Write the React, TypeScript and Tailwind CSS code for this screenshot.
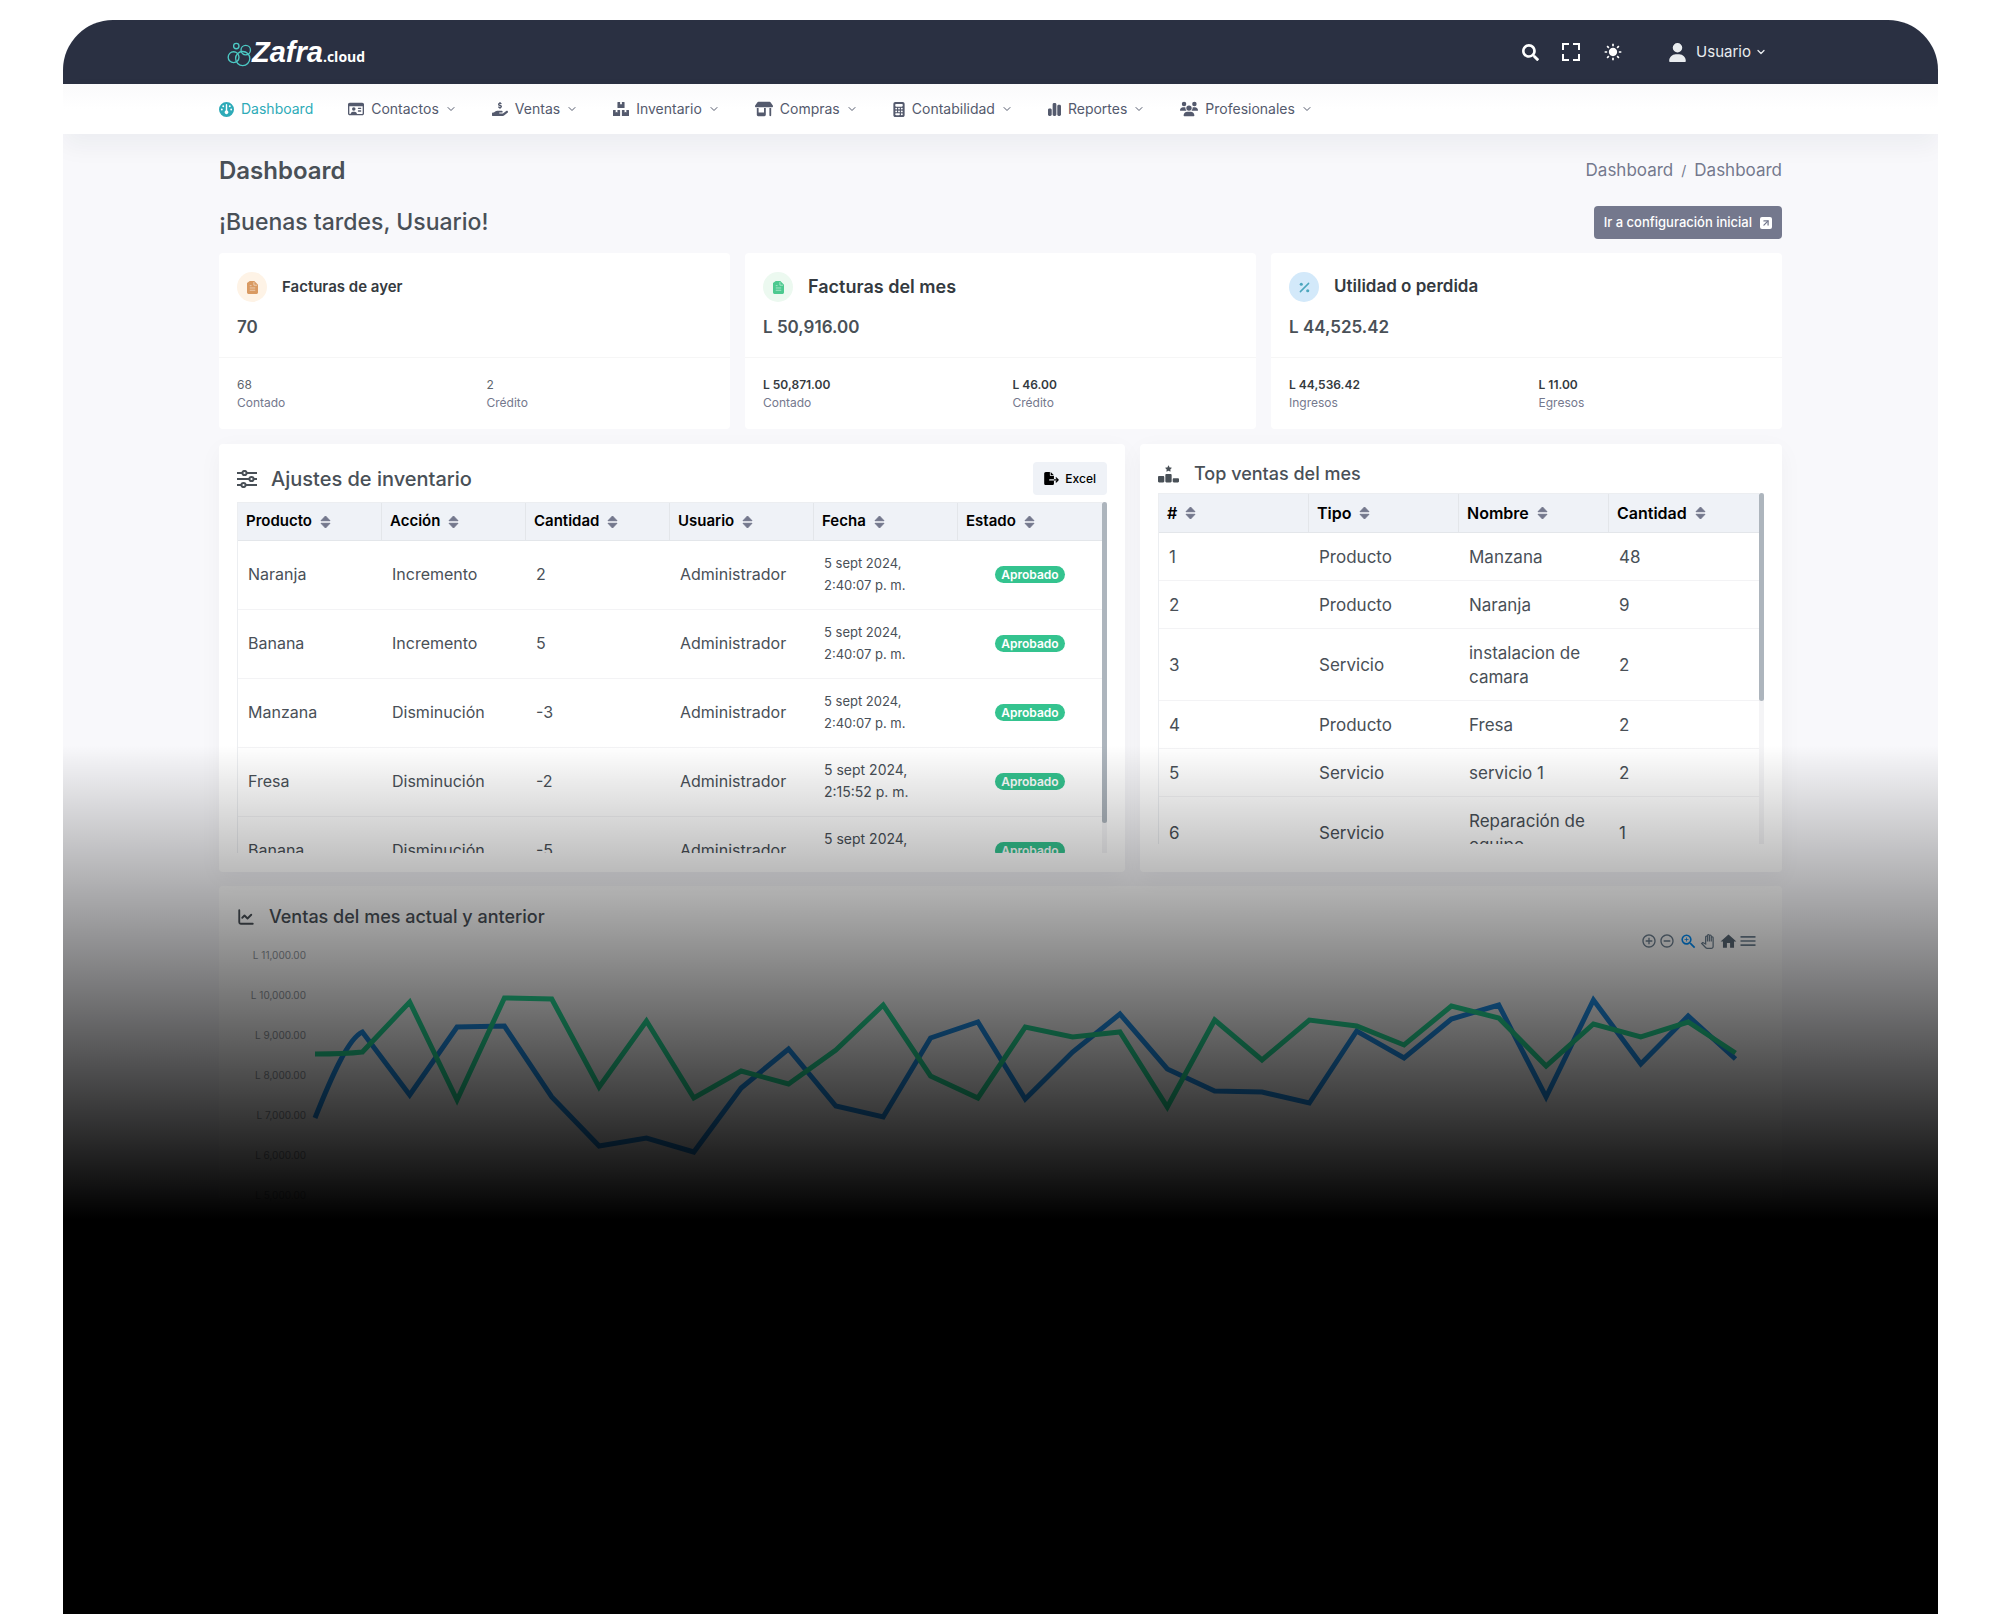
import React from "react";
import {
  FaGauge,
  FaRegIdCard,
  FaHandHoldingDollar,
  FaShop,
  FaCalculator,
  FaChartSimple,
  FaUsers,
  FaUser,
  FaFileExport,
  FaRankingStar,
} from "react-icons/fa6";
import { FaBoxes, FaSearch } from "react-icons/fa";
import { BiFullscreen, BiSolidSun } from "react-icons/bi";
import {
  MdAddCircleOutline,
  MdRemoveCircleOutline,
  MdZoomIn,
  MdOutlinePanTool,
  MdHome,
  MdMenu,
} from "react-icons/md";
import { ChevronDown, ChartLine, ArrowUpRight } from "lucide-react";

const navItems = [
  { label: "Dashboard", icon: FaGauge, size: "size-[15px]", active: true },
  { label: "Contactos", icon: FaRegIdCard, size: "size-4" },
  { label: "Ventas", icon: FaHandHoldingDollar, size: "size-4" },
  { label: "Inventario", icon: FaBoxes, size: "size-4" },
  { label: "Compras", icon: FaShop, size: "h-4 w-[18px]" },
  { label: "Contabilidad", icon: FaCalculator, size: "h-[15px] w-3" },
  { label: "Reportes", icon: FaChartSimple, size: "h-[15px] w-[13px]" },
  { label: "Profesionales", icon: FaUsers, size: "h-4 w-[18px]" },
];

const adjustments = [
  ["Naranja", "Incremento", "2", "5 sept 2024,", "2:40:07 p. m."],
  ["Banana", "Incremento", "5", "5 sept 2024,", "2:40:07 p. m."],
  ["Manzana", "Disminución", "-3", "5 sept 2024,", "2:40:07 p. m."],
  ["Fresa", "Disminución", "-2", "5 sept 2024,", "2:15:52 p. m."],
  ["Banana", "Disminución", "-5", "5 sept 2024,", "2:15:52 p. m."],
];

const topSales = [
  ["1", "Producto", "Manzana", "48"],
  ["2", "Producto", "Naranja", "9"],
  ["3", "Servicio", "instalacion de camara", "2"],
  ["4", "Producto", "Fresa", "2"],
  ["5", "Servicio", "servicio 1", "2"],
  ["6", "Servicio", "Reparación de equipo", "1"],
];

function Logo() {
  return (
    <a href="#" className="flex items-center pt-1 text-white" aria-label="Zafra.cloud">
      <svg viewBox="37 33 73 74" className="size-[25px]" fill="none" stroke="#4cc9c4" strokeWidth="4">
        <circle cx="64" cy="45" r="8" />
        <circle cx="92" cy="57" r="14" />
        <circle cx="56" cy="78" r="16" />
        <circle cx="83" cy="82" r="21" />
      </svg>
      <span className="flex items-baseline leading-8 font-bold">
        <span className="font-['Liberation_Sans',sans-serif] text-[29px] italic">Zafra</span>
        <span className="font-['Open_Sans',sans-serif] text-[14px]">.cloud</span>
      </span>
    </a>
  );
}

function InvoiceIcon({ className }: { className: string }) {
  return (
    <svg viewBox="0 0 12 14" className={className}>
      <path d="M3 0h5l4 4v8.500a1.500 1.500 0 0 1-1.500 1.500H1.500A1.500 1.500 0 0 1 0 12.500V2z" fill="currentColor" />
      <path d="M7.500 1v3.500H11M3 5h2M3 7.500h6M3 10h6" fill="none" stroke="#fff" strokeOpacity="0.6" strokeWidth="0.900" />
    </svg>
  );
}

function PercentIcon({ className }: { className: string }) {
  return (
    <svg viewBox="0 0 12 12" className={className}>
      <path d="M10.500 1.500l-9 9" stroke="currentColor" strokeWidth="1.600" strokeLinecap="round" />
      <circle cx="2.500" cy="2.500" r="1.700" fill="currentColor" />
      <circle cx="9.500" cy="9.500" r="1.700" fill="currentColor" />
    </svg>
  );
}

function SlidersIcon() {
  return (
    <svg viewBox="0 0 20 18" className="h-[18px] w-5 text-[#495057]" fill="none" stroke="currentColor" strokeWidth="2">
      <path d="M0 3h5M10 3h10M0 9h12M17 9h3M0 15h4M9 15h11" />
      <circle cx="7.500" cy="3" r="2.100" />
      <circle cx="14.500" cy="9" r="2.100" />
      <circle cx="6.500" cy="15" r="2.100" />
    </svg>
  );
}

function SortIcon() {
  return (
    <svg viewBox="0 0 11 14" className="h-3.5 w-[11px] text-[#74788d]" fill="currentColor" stroke="currentColor" strokeLinejoin="round">
      <path d="M5.500 1l4.500 4.700H1zM5.500 13l4.500-4.700H1z" />
    </svg>
  );
}

type Stat = {
  title: string;
  titleSize: string;
  value: string;
  items: [string, string][];
  strong: boolean;
  badge: React.ReactNode;
};

const stats: Stat[] = [
  {
    title: "Facturas de ayer",
    titleSize: "text-[15px]",
    value: "70",
    items: [["68", "Contado"], ["2", "Crédito"]],
    strong: false,
    badge: (
      <span className="flex size-[30px] items-center justify-center rounded-full bg-[#fef3e6] text-[#d99a62]">
        <InvoiceIcon className="h-[13px] w-[11px]" />
      </span>
    ),
  },
  {
    title: "Facturas del mes",
    titleSize: "text-lg",
    value: "L 50,916.00",
    items: [["L 50,871.00", "Contado"], ["L 46.00", "Crédito"]],
    strong: true,
    badge: (
      <span className="flex size-[30px] items-center justify-center rounded-full bg-[#ecf9f0] text-[#4cc98f]">
        <InvoiceIcon className="h-[13px] w-[11px]" />
      </span>
    ),
  },
  {
    title: "Utilidad o perdida",
    titleSize: "text-[17px]",
    value: "L 44,525.42",
    items: [["L 44,536.42", "Ingresos"], ["L 11.00", "Egresos"]],
    strong: true,
    badge: (
      <span className="flex size-[30px] items-center justify-center rounded-full bg-[#d3e9fa] text-[#4ba6bd]">
        <PercentIcon className="size-[11px]" />
      </span>
    ),
  },
];

function StatCard({ stat }: { stat: Stat }) {
  return (
    <section className="rounded bg-white">
      <div className="border-b border-[#f6f6f6] px-[18px] pt-[19px] pb-[17px]">
        <div className="flex h-[30px] items-center gap-[15px]">
          {stat.badge}
          <h2 className={`${stat.titleSize} font-semibold text-[#343a40]`}>{stat.title}</h2>
        </div>
        <p className="mt-3 text-[17px] leading-[26px] font-semibold text-[#495057]">{stat.value}</p>
      </div>
      <dl className="grid grid-cols-2 gap-6 px-[18px] py-[18px]">
        {stat.items.map(([value, label]) => (
          <div key={label} className="flex flex-col-reverse text-xs">
            <dt className="leading-[17px] text-[#74788d]">{label}</dt>
            <dd className={stat.strong ? "leading-[18px] font-semibold text-[#343a40]" : "leading-[18px] text-[#60666d]"}>
              {value}
            </dd>
          </div>
        ))}
      </dl>
    </section>
  );
}

function HeadCell({ children }: { children: React.ReactNode }) {
  return (
    <th scope="col" className="border-r border-b border-[#e3e6ea] bg-[#eff2f7] px-2 text-left font-semibold text-black last:border-r-0">
      <span className="flex items-center gap-2">
        {children}
        <SortIcon />
      </span>
    </th>
  );
}

function Scrollbar({ thumb }: { thumb: string }) {
  return (
    <div className="w-[5px] shrink-0 bg-[#f4f4f6]">
      <div className={`${thumb} rounded-full bg-[#adb5bd]`} />
    </div>
  );
}

const previous = [
  1054, 1052, 1002, 1100, 998, 999, 1087, 1021, 1098, 1071, 1084, 1050, 1005, 1076, 1098, 1027, 1037, 1032, 1107, 1020,
  1060, 1020, 1026, 1045, 1006, 1018, 1066, 1024, 1037, 1022, 1053,
];
const current = [
  1118, 1032, 1095, 1027, 1026, 1097, 1146, 1138, 1152, 1088, 1049, 1106, 1117, 1038, 1022, 1099, 1052, 1014, 1069, 1091,
  1092, 1103, 1031, 1058, 1019, 1005, 1097, 1000, 1064, 1016, 1059,
];
const px = (i: number) => 78 + i * 47.35;
const py = (v: number) => v - 952;
const tail = (values: number[]) =>
  values
    .slice(2)
    .map((v, i) => `L${px(i + 2)} ${py(v)}`)
    .join("");
const currentPath = `M${px(0)} ${py(current[0])}C${px(0) + 16} ${py(1078)} ${px(1) - 14} ${py(1038)} ${px(1)} ${py(current[1])}${tail(current)}`;
const previousPath = `M${px(0)} ${py(previous[0])}Q${px(0) + 30} ${py(1054)} ${px(1)} ${py(previous[1])}${tail(previous)}`;
const ticks = ["L 11,000.00", "L 10,000.00", "L 9,000.00", "L 8,000.00", "L 7,000.00", "L 6,000.00", "L 5,000.00"];

function SalesChart() {
  return (
    <svg viewBox="0 0 1527 290" className="block h-auto w-full overflow-visible" role="img" aria-label="Ventas del mes">
      {ticks.map((t, i) => (
        <text key={t} x="69" y={7 + i * 40} textAnchor="end" fontSize="10" fill="#90969d">
          {t}
        </text>
      ))}
      <path d={currentPath} fill="none" stroke="#1e90ea" strokeWidth="5" />
      <path d={previousPath} fill="none" stroke="#26dd98" strokeWidth="5" />
    </svg>
  );
}

const tools = [
  { label: "Acercar", icon: MdAddCircleOutline, style: "size-4 text-[#6e8192]" },
  { label: "Alejar", icon: MdRemoveCircleOutline, style: "ml-0.5 size-4 text-[#6e8192]" },
  { label: "Zoom de selección", icon: MdZoomIn, style: "ml-1 size-[19px] text-[#008ffb]" },
  { label: "Desplazar", icon: MdOutlinePanTool, style: "ml-0.5 size-[15px] text-[#6e8192]" },
  { label: "Restablecer", icon: MdHome, style: "ml-1 size-[19px] text-[#5b6a78]" },
  { label: "Menú", icon: MdMenu, style: "size-5 text-[#6e8192]" },
];

export default function App() {
  return (
    <div className="flex min-h-screen flex-col bg-white pt-5 pr-[62px] pl-[63px] font-[Inter,sans-serif] text-[#495057]">
      <div className="relative flex-1 overflow-hidden rounded-t-[50px] bg-[#f8f8fb]">
        <header className="flex h-16 items-center justify-between bg-[#2a3042] pr-[171px] pl-[164px]">
          <Logo />
          <div className="flex items-center text-white">
            <button type="button" aria-label="Buscar">
              <FaSearch className="size-[17px]" />
            </button>
            <button type="button" aria-label="Pantalla completa" className="ml-5">
              <BiFullscreen className="size-6" />
            </button>
            <button type="button" aria-label="Tema" className="ml-5">
              <BiSolidSun className="size-5" />
            </button>
            <button type="button" className="ml-[46px] flex items-center text-[15px] text-[#e9ecef]">
              <FaUser className="mr-2.5 h-[19px] w-[17px]" />
              Usuario
              <ChevronDown className="ml-1 size-3" strokeWidth={2.5} />
            </button>
          </div>
        </header>

        <nav className="relative flex h-[50px] items-center gap-[35px] bg-linear-to-b from-[#fafafb] to-white to-50% px-[156px] text-sm shadow-[0_12px_24px_rgba(18,38,63,0.05)]">
          {navItems.map(({ label, icon: Icon, size, active }) => (
            <a key={label} href="#" className={active ? "flex items-center text-[#2eabb8]" : "flex items-center text-[#545a6d]"}>
              <Icon className={`${size} mr-[7px]`} />
              {label}
              {!active && <ChevronDown className="ml-1.5 size-3" strokeWidth={2} />}
            </a>
          ))}
        </nav>

        <main className="px-[156px]">
          <div className="flex h-[72px] items-center justify-between pt-0.5">
            <h1 className="text-2xl font-semibold">Dashboard</h1>
            <div className="flex items-center gap-2 text-[17px] text-[#74788d]">
              <a href="#">Dashboard</a>
              <span className="text-sm">/</span>
              <span>Dashboard</span>
            </div>
          </div>

          <div className="flex h-[33px] items-center justify-between">
            <p className="text-[23px] font-medium">¡Buenas tardes, Usuario!</p>
            <button type="button" className="flex h-[33px] items-center gap-2 rounded bg-[#74788d] px-2.5 text-[13px] font-medium text-white">
              Ir a configuración inicial
              <span className="flex size-3 items-center justify-center rounded-xs bg-white text-[#74788d]">
                <ArrowUpRight className="size-2.5" strokeWidth={3} />
              </span>
            </button>
          </div>

          <div className="mt-3.5 grid grid-cols-3 gap-[15px]">
            {stats.map((s) => (
              <StatCard key={s.title} stat={s} />
            ))}
          </div>

          <div className="mt-[15px] grid grid-cols-[906fr_642fr] gap-[15px]">
            <section className="rounded bg-white px-[18px] pt-[18px] pb-[19px] shadow-[0_6px_24px_rgba(18,38,63,0.04)]">
              <div className="flex h-[33px] items-center justify-between">
                <h2 className="flex items-center gap-3.5 text-xl font-medium">
                  <SlidersIcon />
                  Ajustes de inventario
                </h2>
                <button type="button" className="flex h-[33px] items-center gap-1.5 rounded bg-[#eff2f7] px-[11px] text-xs font-medium text-black">
                  <FaFileExport className="h-[13px] w-[15px]" />
                  Excel
                </button>
              </div>
              <div className="mt-[7px] flex h-[351px] overflow-hidden">
                <div className="flex-1 border-t border-l border-[#eceef1]">
                  <table className="w-full table-fixed border-separate border-spacing-0">
                    <thead>
                      <tr className="h-[38px] text-[15px]">
                        <HeadCell>Producto</HeadCell>
                        <HeadCell>Acción</HeadCell>
                        <HeadCell>Cantidad</HeadCell>
                        <HeadCell>Usuario</HeadCell>
                        <HeadCell>Fecha</HeadCell>
                        <HeadCell>Estado</HeadCell>
                      </tr>
                    </thead>
                    <tbody>
                      {adjustments.map(([product, action, amount, day, time], i) => (
                        <tr key={i} className="h-[69px] text-base *:border-b *:border-[#f3f3f5] *:px-2.5 *:pb-0.5">
                          <td>{product}</td>
                          <td>{action}</td>
                          <td>{amount}</td>
                          <td>Administrador</td>
                          <td className={i < 3 ? "text-[13px] leading-[22px]" : "text-sm leading-[22px]"}>
                            {day}
                            <br />
                            {time}
                          </td>
                          <td>
                            <span className="mx-auto block w-fit rounded-full bg-[#34c38f] px-1.5 text-xs leading-[17px] font-semibold text-white">
                              Aprobado
                            </span>
                          </td>
                        </tr>
                      ))}
                    </tbody>
                  </table>
                </div>
                <Scrollbar thumb="h-[321px]" />
              </div>
            </section>

            <section className="rounded bg-white px-[18px] pt-[18px] pb-7 shadow-[0_6px_24px_rgba(18,38,63,0.04)]">
              <h2 className="flex h-6 items-center gap-[15px] text-lg font-medium">
                <FaRankingStar className="h-[18px] w-[21px]" />
                Top ventas del mes
              </h2>
              <div className="mt-[7px] flex h-[351px] overflow-hidden">
                <div className="flex-1 border-t border-l border-[#eceef1]">
                  <table className="w-full table-fixed border-separate border-spacing-0">
                    <thead>
                      <tr className="h-[39px] text-base">
                        <HeadCell>#</HeadCell>
                        <HeadCell>Tipo</HeadCell>
                        <HeadCell>Nombre</HeadCell>
                        <HeadCell>Cantidad</HeadCell>
                      </tr>
                    </thead>
                    <tbody>
                      {topSales.map((row) => (
                        <tr key={row[0]} className="text-[17px] leading-6 *:border-b *:border-[#f3f3f5] *:px-2.5 *:pt-3 *:pb-[11px]">
                          {row.map((cell, i) => (
                            <td key={i}>{cell}</td>
                          ))}
                        </tr>
                      ))}
                    </tbody>
                  </table>
                </div>
                <Scrollbar thumb="h-[208px]" />
              </div>
            </section>
          </div>

          <section className="mt-3.5 rounded bg-white px-[18px] pt-[18px] pb-6">
            <h2 className="flex h-[26px] items-center gap-3.5 text-lg font-medium">
              <ChartLine className="size-[18px]" strokeWidth={2.5} />
              Ventas del mes actual y anterior
            </h2>
            <div className="flex h-[22px] items-center justify-end pr-1.5">
              {tools.map(({ label, icon: Icon, style }) => (
                <button key={label} type="button" aria-label={label}>
                  <Icon className={style} />
                </button>
              ))}
            </div>
            <SalesChart />
          </section>
        </main>

        <div className="pointer-events-none absolute inset-x-0 top-[725px] bottom-0 bg-linear-to-b from-transparent to-black to-[474px]" />
      </div>
    </div>
  );
}
